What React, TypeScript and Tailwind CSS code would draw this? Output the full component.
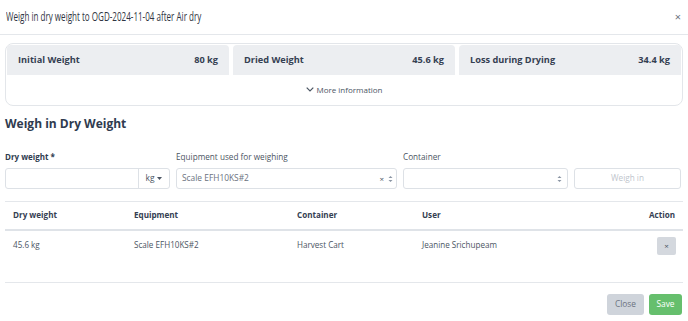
import React from "react";

const font = { fontFamily: '"Open Sans", sans-serif' };

const stats = [
  { label: "Initial Weight", value: "80 kg" },
  { label: "Dried Weight", value: "45.6 kg" },
  { label: "Loss during Drying", value: "34.4 kg" },
];

const Updown = () => (
  <svg width="5" height="8" viewBox="0 0 5 8" className="text-[#8a94a3]">
    <path d="M0.5 3 L2.5 1 L4.5 3 Z M0.5 5 L2.5 7 L4.5 5 Z" fill="currentColor" />
  </svg>
);

const App = () => {
  return (
    <div className="w-[688px] h-[321px] bg-white overflow-hidden text-[#3b4556]" style={font}>
      <div className="h-[35px] flex items-center justify-between px-[6px] border-b border-[#e4e7eb]">
        <p className="inline-block origin-left scale-x-[0.645] text-[12.5px] text-[#2f3542] whitespace-nowrap">
          Weigh in dry weight to OGD-2024-11-04 after Air dry
        </p>
        <span className="text-[11px] text-[#6b7280] mr-[1px]">×</span>
      </div>

      <div className="px-[5px] pt-[8px]">
        <div className="border border-[#e3e6ea] rounded-[8px] h-[63px] p-[1px] flex flex-col">
          <div className="flex gap-[4px]">
            {stats.map((s) => (
              <div key={s.label} className="flex-1 h-[30px] bg-[#eceef1] rounded-t-[4px] px-[11px] flex items-center justify-between text-[9.2px] font-bold text-[#354052]">
                <span>{s.label}</span>
                <span>{s.value}</span>
              </div>
            ))}
          </div>
          <div className="flex-1 flex items-center justify-center gap-[3px] text-[8px] text-[#4b5563]">
            <svg width="8" height="5" viewBox="0 0 8 5" fill="none">
              <path d="M0.7 0.7 L4 4 L7.3 0.7" stroke="#4b5563" strokeWidth="1.2" />
            </svg>
            <span>More information</span>
          </div>
        </div>

        <h2 className="mt-[10px] text-[12px] font-bold text-[#2f3b4f] leading-[16px]">Weigh in Dry Weight</h2>

        <div className="mt-[19px] grid grid-cols-[165px_221px_165px_107px] gap-x-[6px] gap-y-[5px] items-end">
          <label className="text-[8px] font-bold text-[#2f3b4f] leading-[12px]">Dry weight *</label>
          <label className="text-[8.2px] text-[#4b5563] leading-[12px]">Equipment used for weighing</label>
          <label className="text-[8.2px] text-[#4b5563] leading-[12px]">Container</label>
          <span />
          <div className="h-[21px] flex border border-[#dde1e6] rounded-[3px]">
            <div className="flex-1" />
            <div className="w-[31px] border-l border-[#dde1e6] flex items-center justify-center gap-[3px] text-[8.4px] text-[#4b5563]">
              kg
              <svg width="5" height="3" viewBox="0 0 5 3">
                <path d="M0 0 L5 0 L2.5 3 Z" fill="#4b5563" />
              </svg>
            </div>
          </div>
          <div className="h-[21px] flex items-center justify-between border border-[#dde1e6] rounded-[3px] pl-[5px] pr-[3px] text-[8.4px] text-[#6b7280]">
            <span>Scale EFH10KS#2</span>
            <span className="flex items-center gap-[4px]">
              <span className="text-[8px] text-[#4b5563]">×</span>
              <Updown />
            </span>
          </div>
          <div className="h-[21px] flex items-center justify-end border border-[#dde1e6] rounded-[3px] pr-[5px]">
            <Updown />
          </div>
          <button className="h-[21px] border border-[#dde1e6] rounded-[3px] text-[8.2px] text-[#c0c5cc]">Weigh in</button>
        </div>

        <div className="mt-[12px] border-t border-[#e4e7eb]" />

        <div className="grid grid-cols-[129px_163px_125px_1fr_60px] text-[8.1px]">
          <div className="h-[29px] pl-[8px] flex items-center font-bold text-[#354052] border-b-2 border-[#dfe3e8]">Dry weight</div>
          <div className="h-[29px] flex items-center font-bold text-[#354052] border-b-2 border-[#dfe3e8]">Equipment</div>
          <div className="h-[29px] flex items-center font-bold text-[#354052] border-b-2 border-[#dfe3e8]">Container</div>
          <div className="h-[29px] flex items-center font-bold text-[#354052] border-b-2 border-[#dfe3e8]">User</div>
          <div className="h-[29px] pr-[8px] flex items-center justify-end font-bold text-[#354052] border-b-2 border-[#dfe3e8]">Action</div>

          <div className="h-[52px] pl-[8px] pt-[8px] leading-[12px] text-[#4b5563] border-b border-[#e4e7eb]">45.6 kg</div>
          <div className="h-[52px] pt-[8px] leading-[12px] text-[#4b5563] border-b border-[#e4e7eb]">Scale EFH10KS#2</div>
          <div className="h-[52px] pt-[8px] leading-[12px] text-[#4b5563] border-b border-[#e4e7eb]">Harvest Cart</div>
          <div className="h-[52px] pt-[8px] leading-[12px] text-[#4b5563] border-b border-[#e4e7eb]">Jeanine Srichupeam</div>
          <div className="h-[52px] pt-[6px] pr-[7px] flex justify-end border-b border-[#e4e7eb]">
            <button className="w-[19px] h-[18px] rounded-[2px] bg-[#d4d8de] text-[8px] text-[#4b5563] flex items-center justify-center">×</button>
          </div>
        </div>

        <div className="flex justify-end gap-[5px] pt-[11px] pr-[1px]">
          <button className="w-[37px] h-[21px] rounded-[3px] bg-[#cfd4db] text-[8.4px] text-[#6b7280]">Close</button>
          <button className="w-[33px] h-[21px] rounded-[3px] bg-[#66bf6d] text-[8.4px] text-white">Save</button>
        </div>
      </div>
    </div>
  );
};

export default App;
